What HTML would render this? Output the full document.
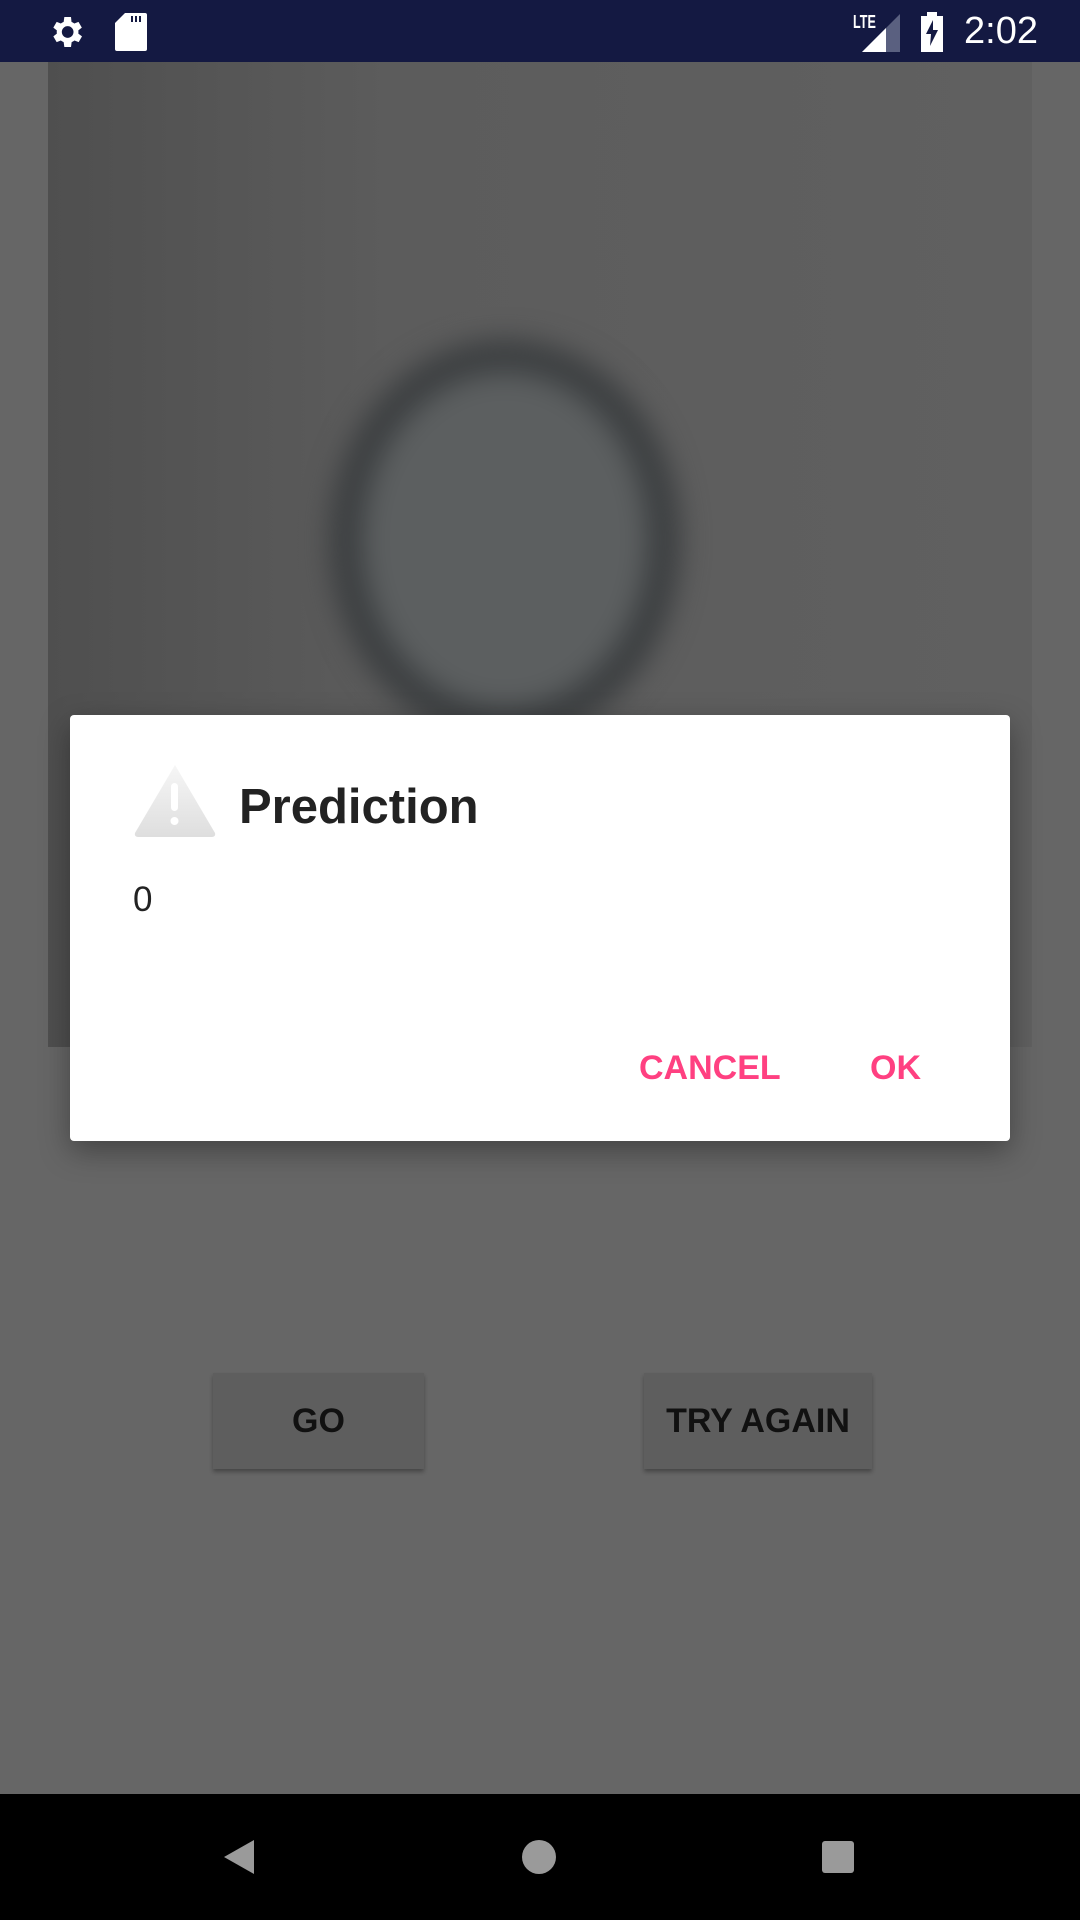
<!DOCTYPE html>
<html><head><style>
body{margin:0;width:1080px;height:1920px;background:#666;position:relative;overflow:hidden;font-family:"Liberation Sans",sans-serif}
.abs{position:absolute}
</style></head><body>
<div class="abs" style="left:0;top:0;width:1080px;height:62px;background:#141942"></div>
<svg class="abs" style="left:46px;top:12px" width="40" height="40" viewBox="0 0 24 24"><path fill="#fff" d="M19.4 13a7.5 7.5 0 0 0 0-2l2.1-1.6-2-3.5-2.5 1a7 7 0 0 0-1.7-1L15 3h-4l-.4 2.9a7 7 0 0 0-1.7 1l-2.5-1-2 3.5L6.5 11a7.5 7.5 0 0 0 0 2l-2.1 1.6 2 3.5 2.5-1a7 7 0 0 0 1.7 1L11 21h4l.4-2.9a7 7 0 0 0 1.7-1l2.5 1 2-3.5zM13 15.5a3.5 3.5 0 1 1 0-7 3.5 3.5 0 0 1 0 7z"/></svg>
<svg class="abs" style="left:115px;top:13px" width="32" height="38" viewBox="0 0 16 19"><path fill="#fff" d="M5 0h10a1 1 0 0 1 1 1v17a1 1 0 0 1-1 1H1a1 1 0 0 1-1-1V5z"/><path fill="#141942" d="M8 1.5h1v3H8zM10 1.5h1v3h-1zM12 1.5h1v3h-1z"/></svg>
<div class="abs" style="left:853px;top:12px;color:#fff;font-size:18px;font-weight:bold;transform:scaleX(.7);transform-origin:left">LTE</div>
<svg class="abs" style="left:862px;top:14px" width="38" height="38" viewBox="0 0 38 38"><path fill="#5a6080" d="M38 0V38H0z"/><path fill="#fff" d="M24 14V38H0z"/></svg>
<svg class="abs" style="left:921px;top:12px" width="22" height="40" viewBox="0 0 11 20"><path fill="#fff" d="M3 0h5v2h3v18H0V2h3z"/><path fill="#141942" d="M6 4L2.5 11H5L4.5 17 8.5 9H6z"/></svg>
<div class="abs" style="left:964px;top:10px;color:#fff;font-size:38px">2:02</div>
<div class="abs" style="left:48px;top:62px;width:984px;height:985px;background:linear-gradient(90deg,#4f4f4f,#5c5c5c 35%,#606060)"></div>
<div class="abs" style="left:330px;top:340px;width:350px;height:400px;border-radius:50%;border:32px solid #3a3d3f;box-sizing:border-box;filter:blur(14px);background:#5c5f60"></div>
<div class="abs" style="left:213px;top:1373px;width:211px;height:96px;background:#5e5e5e;box-shadow:0 3px 4px rgba(0,0,0,.3);color:#111;font-size:34px;font-weight:bold;text-align:center;line-height:96px">GO</div>
<div class="abs" style="left:644px;top:1373px;width:228px;height:96px;background:#5e5e5e;box-shadow:0 3px 4px rgba(0,0,0,.3);color:#111;font-size:34px;font-weight:bold;text-align:center;line-height:96px">TRY AGAIN</div>
<div class="abs" style="left:70px;top:715px;width:940px;height:426px;background:#fff;border-radius:4px;box-shadow:0 10px 30px rgba(0,0,0,.35)">
<svg class="abs" style="left:63px;top:48px" width="84" height="76" viewBox="0 0 84 76"><defs><linearGradient id="g" x1="0" y1="0" x2="0" y2="1"><stop offset="0" stop-color="#f6f6f6"/><stop offset="1" stop-color="#dedede"/></linearGradient></defs><path fill="url(#g)" d="M42 2L82 70Q83 74 78 74H6Q1 74 2 70z"/><rect x="38" y="20" width="7" height="28" rx="3.5" fill="#fff"/><circle cx="41.5" cy="58" r="4" fill="#fff"/></svg>
<div class="abs" style="left:169px;top:64px;font-size:49px;font-weight:bold;color:#222">Prediction</div>
<div class="abs" style="left:63px;top:165px;font-size:35px;color:#222">0</div>
<div class="abs" style="left:569px;top:334px;font-size:34px;font-weight:bold;color:#ff4081">CANCEL</div>
<div class="abs" style="left:800px;top:334px;font-size:34px;font-weight:bold;color:#ff4081">OK</div>
</div>
<div class="abs" style="left:0;top:1794px;width:1080px;height:126px;background:#000"></div>
<svg class="abs" style="left:222px;top:1838px" width="34" height="38" viewBox="0 0 34 38"><path fill="#9a9a9a" d="M32 2V36L2 19z"/></svg>
<div class="abs" style="left:522px;top:1840px;width:34px;height:34px;border-radius:50%;background:#9a9a9a"></div>
<div class="abs" style="left:822px;top:1841px;width:32px;height:32px;border-radius:3px;background:#9a9a9a"></div>
</body></html>
